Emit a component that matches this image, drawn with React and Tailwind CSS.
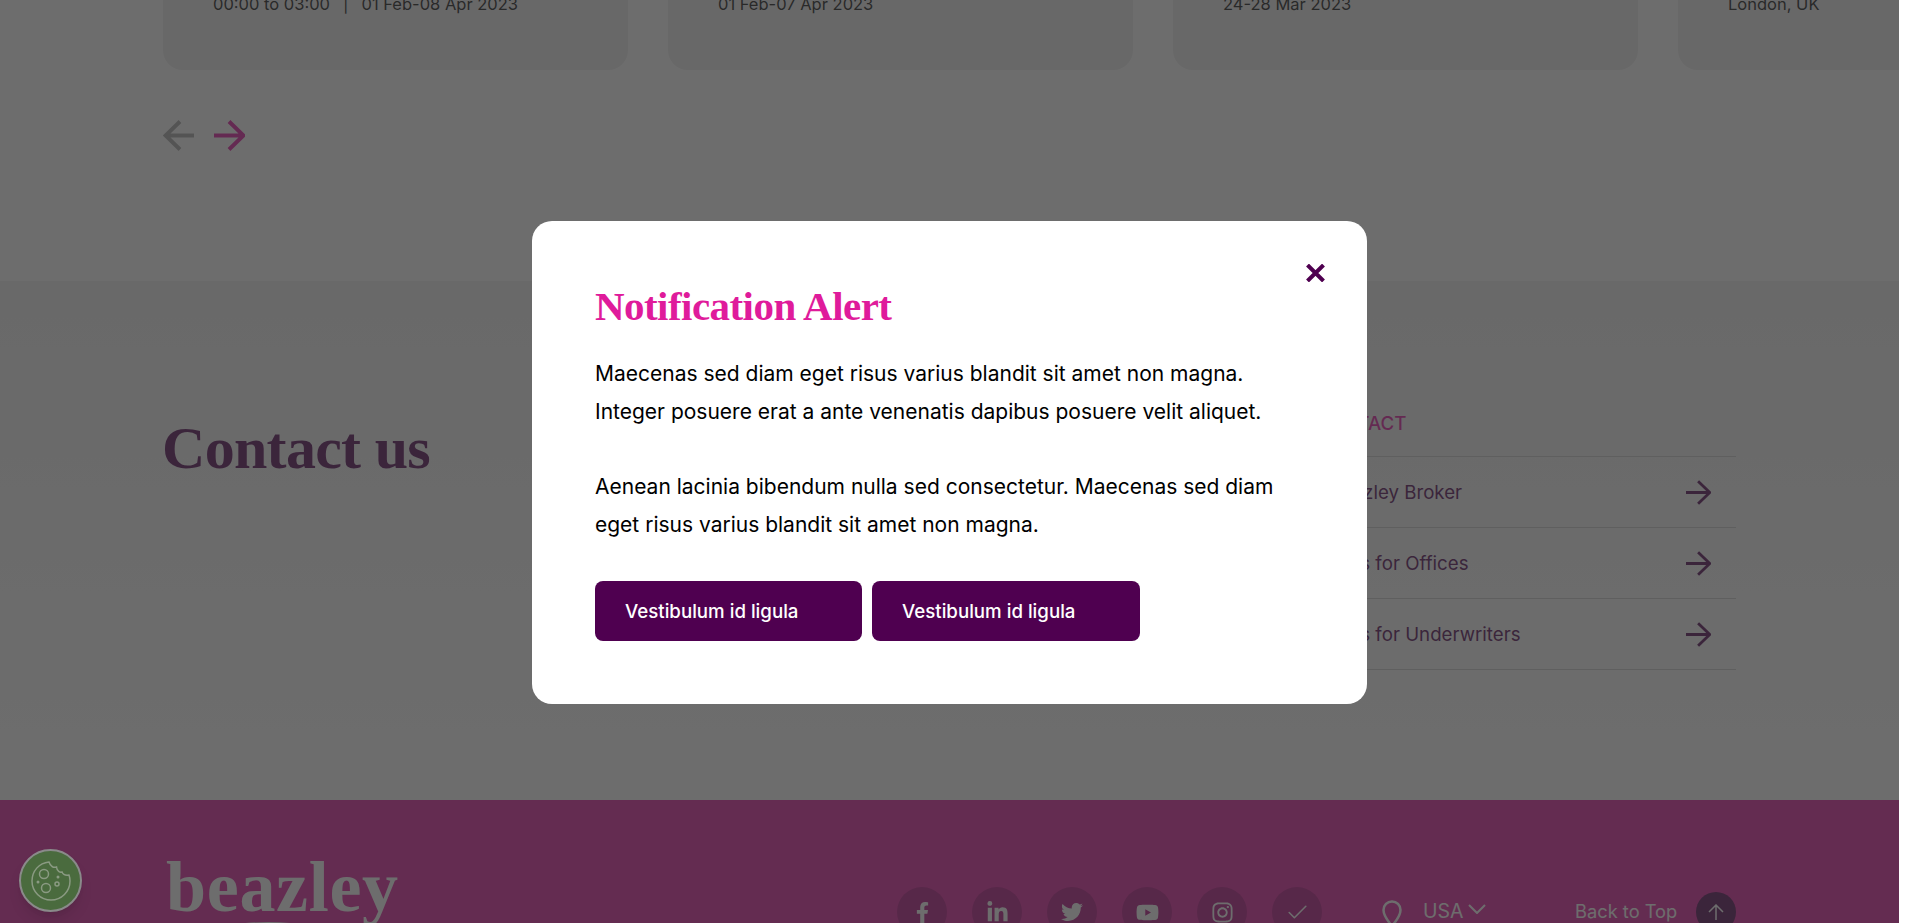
import React from "react";
import { Check } from "lucide-react";
import { FaFacebookF, FaLinkedinIn, FaTwitter, FaYoutube, FaInstagram } from "react-icons/fa";

const cards = [
  { text: "00:00 to 03:00", extra: "01 Feb-08 Apr 2023" },
  { text: "01 Feb-07 Apr 2023" },
  { text: "24-28 Mar 2023" },
  { text: "London, UK" },
];

const links = ["Ask Beazley Broker", "Contacts for Offices", "Contacts for Underwriters"];

const socials = [
  { Icon: FaFacebookF, size: 21 },
  { Icon: FaLinkedinIn, size: 23 },
  { Icon: FaTwitter, size: 22 },
  { Icon: FaYoutube, size: 23 },
  { Icon: FaInstagram, size: 23 },
];

function Arrow({ size = 31, width = 4, className = "", flip = false }) {
  return (
    <svg width={size} height={size} viewBox="0 0 31 31" fill="none" stroke="currentColor" strokeWidth={width} className={className}>
      {flip ? <path d="M31 15.5H2M17 1.5 2.5 15.5 17 29.5" /> : <path d="M0 15.5h30M15 1.5l14.5 14L15 29.5" />}
    </svg>
  );
}

function CookieIcon() {
  return (
    <svg width="40" height="40" viewBox="0 0 40 40" fill="none" stroke="currentColor" strokeWidth="1.5">
      <path d="M18 1C8 2 1 10 1 20c0 10.500 8.500 19 19 19s19-8.500 19-19c0-2-.3-4-1-6-3 .5-6-.5-7-3-2 .5-5-.5-5.500-5-2.500 1-6 0-7.500-5z" />
      <circle cx="13" cy="13" r="4.500" />
      <circle cx="15" cy="27" r="4.500" />
      <circle cx="26" cy="23" r="2" />
      <circle cx="27" cy="16" r="1.500" fill="currentColor" stroke="none" />
      <circle cx="7" cy="21" r="1.500" fill="currentColor" stroke="none" />
    </svg>
  );
}

function Modal() {
  return (
    <div className="relative w-[835px] rounded-[20px] bg-white pt-[61px] pb-[63px] pl-[63px] pr-[50px] text-black">
      <button className="absolute top-[43px] right-[42px] text-[#4f0050]">
        <svg width="19" height="18" viewBox="0 0 19 18" fill="none" stroke="currentColor" strokeWidth="4" className="block">
          <path d="M1.500 1 17.500 17M17.500 1 1.500 17" />
        </svg>
      </button>
      <h2 className="font-['Liberation_Serif',serif] text-[41px] leading-[48px] font-bold tracking-[-0.55px] text-[#df1b9b]">
        Notification Alert
      </h2>
      <p className="mt-[25px] text-[21px] leading-[37.7px]">
        Maecenas sed diam eget risus varius blandit sit amet non magna.
        <br />
        Integer posuere erat a ante venenatis dapibus posuere velit aliquet.
        <br />
        <br />
        Aenean lacinia bibendum nulla sed consectetur. Maecenas sed diam
        <br />
        eget risus varius blandit sit amet non magna.
      </p>
      <div className="mt-[37.5px] flex gap-[10px]">
        <button className="h-[60px] w-[267px] rounded-[8px] bg-[#4f0050] pt-[2px] pl-[30px] text-left text-[18.7px] font-medium text-white">
          Vestibulum id ligula
        </button>
        <button className="h-[60px] w-[268px] rounded-[8px] bg-[#4f0050] pt-[2px] pl-[30px] text-left text-[18.7px] font-medium text-white">
          Vestibulum id ligula
        </button>
      </div>
    </div>
  );
}

export default function App() {
  return (
    <div className="flex h-[923px] overflow-hidden bg-white font-['Inter',sans-serif]">
      <div className="relative h-full w-[1899px] shrink-0 overflow-hidden">
        {/* events carousel, scrolled past its top */}
        <section className="h-[281px] overflow-hidden bg-white pl-[163px]">
          <div className="-mt-[60px] flex gap-[40px]">
            {cards.map((card) => (
              <div key={card.text} className="h-[130px] w-[465px] shrink-0 rounded-[20px] bg-[#ededed] pt-[52px] pl-[50px] text-[16.5px] leading-[24px] text-[#0f0f0f]">
                {card.text}
                {card.extra && <span className="mx-[13px]">|</span>}
                {card.extra}
              </div>
            ))}
          </div>
          <div className="mt-[50px] flex gap-[20px]">
            <Arrow flip className="text-[#a8a8a8]" />
            <Arrow className="text-[#e0159f]" />
          </div>
        </section>

        {/* contact */}
        <section className="flex h-[519px] justify-between bg-gradient-to-b from-[#f0f0f0] to-[#ffffff] px-[163px]">
          <h2 className="mt-[131px] -ml-px font-['Liberation_Serif',serif] text-[60px] leading-[72px] font-bold tracking-[-0.7px] text-[#4f0050]">
            Contact us
          </h2>
          <div className="w-[445px] pt-[125px]">
            <div className="h-[51px] border-b border-[#cccccc] text-[18.7px] font-medium leading-[36px] text-[#e0159f]">
              IN CONTACT
            </div>
            {links.map((link) => (
              <div key={link} className="flex h-[71px] items-center justify-between border-b border-[#cccccc] pr-[25px] text-[18.7px] text-[#4f0050]">
                <span className="mt-[2px]">{link}</span>
                <Arrow size={25} width={3.5} />
              </div>
            ))}
          </div>
        </section>

        <footer className="flex h-[200px] items-start justify-between bg-[#df1b9b] pt-[45px] pr-[163px] pl-[166px] text-white">
          <div className="relative font-['Liberation_Serif',serif] text-[72px] leading-[85px] font-bold tracking-[0.7px]">
            beazley
            <svg width="100" height="10" viewBox="0 0 100 10" fill="currentColor" className="absolute top-[74px] left-[52px]">
              <path d="M0 8Q50-2 100 8V10H0z" />
            </svg>
          </div>
          <div className="mt-[42px] flex items-center">
            <div className="flex gap-[25px]">
              {socials.map(({ Icon, size }, i) => (
                <span key={i} className="flex h-[50px] w-[50px] items-center justify-center rounded-full bg-[#b10c80]">
                  <Icon size={size} />
                </span>
              ))}
              <span className="flex h-[50px] w-[50px] items-center justify-center rounded-full bg-[#b10c80]">
                <Check size={25} strokeWidth={1.5} />
              </span>
            </div>
            <svg width="20" height="28" viewBox="0 0 20 28" fill="none" stroke="currentColor" strokeWidth="2.500" className="mt-[4px] ml-[60px]">
              <path d="M10 1.500a8.500 8.500 0 0 1 8.500 8.500c0 6-8.500 16-8.500 16S1.500 16 1.500 10A8.500 8.500 0 0 1 10 1.500z" />
            </svg>
            <span className="ml-[21px] w-[40px] text-[19.5px]">USA</span>
            <svg width="18" height="10" viewBox="0 0 18 10" fill="none" stroke="currentColor" strokeWidth="2" className="mb-[6px] ml-[5px]">
              <path d="M1 1l8 8 8-8" />
            </svg>
            <span className="ml-[89px] w-[100px] text-[18.3px] whitespace-nowrap">Back to Top</span>
            <span className="ml-[21px] flex h-[40px] w-[40px] items-center justify-center rounded-full bg-[#4f0050]">
              <svg width="16" height="16" viewBox="0 0 16 16" fill="none" stroke="currentColor" strokeWidth="1.500">
                <path d="M8 16V1M1 8l7-7 7 7" />
              </svg>
            </span>
          </div>
        </footer>

        {/* dim layer and dialog */}
        <div className="absolute inset-0 flex items-center justify-center bg-[rgba(52,52,52,0.716)] pt-[2px]">
          <Modal />
        </div>

        {/* cookie button, colours already dimmed */}
        <button className="absolute top-[849px] left-[19px] flex h-[63px] w-[63px] items-center justify-center rounded-full border-2 border-[#8a8a8a] bg-[#4a6b3e] text-[#8a9a82] shadow-lg">
          <CookieIcon />
        </button>
      </div>
      <div className="h-full flex-1 bg-white" />
    </div>
  );
}
